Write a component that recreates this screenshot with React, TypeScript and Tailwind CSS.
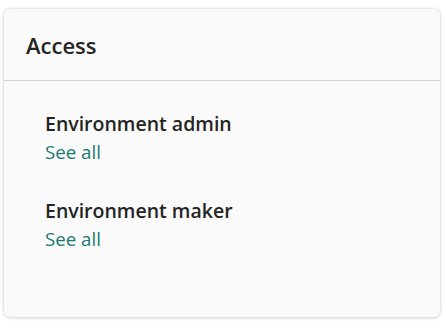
import React from "react";

export default function App() {
  const groups = ["Environment admin", "Environment maker"];
  return (
    <div
      className="w-[446px] h-[328px] bg-white pt-[9px] pl-[4px]"
      style={{ fontFamily: '"Open Sans", "Noto Sans", Arial, sans-serif' }}
    >
      <div className="w-[436px] h-[308px] bg-[#fafafa] rounded-[6px] shadow-[0_0_3px_rgba(0,0,0,0.18),0_1px_4px_rgba(0,0,0,0.10)] flex flex-col">
        <div className="h-[72px] border-b border-[#d1d1d1] pl-[22px] pt-[21px]">
          <div className="text-[22px] leading-[30px] font-semibold text-[#242424]">Access</div>
        </div>
        <div className="pl-[41px] pt-[30px] flex flex-col gap-[33px]">
          {groups.map((g) => (
            <div key={g} className="flex flex-col gap-[2px]">
              <div className="text-[19.5px] leading-[26px] font-semibold text-[#242424]">{g}</div>
              <a className="text-[18.7px] leading-[26px] text-[#1a7a70] cursor-pointer">See all</a>
            </div>
          ))}
        </div>
      </div>
    </div>
  );
}
